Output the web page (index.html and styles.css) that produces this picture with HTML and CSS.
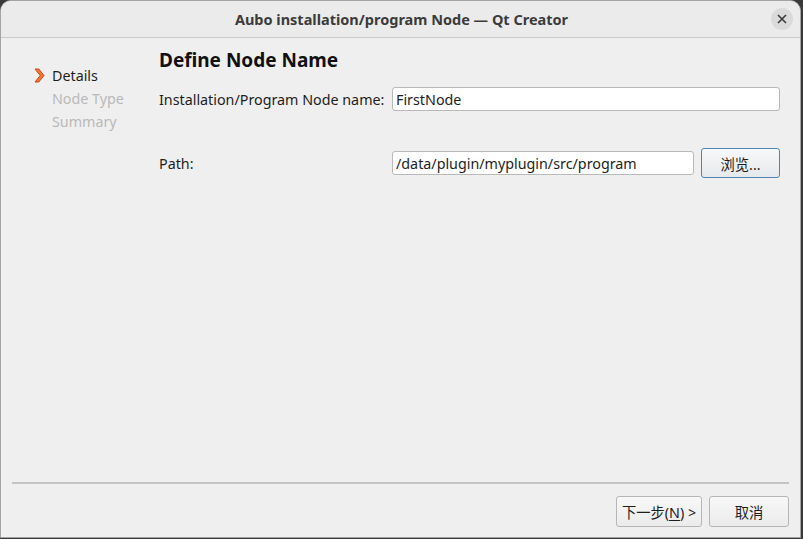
FILE: index.html
```html
<!DOCTYPE html>
<html>
<head>
<meta charset="utf-8">
<link rel="stylesheet" href="styles.css">
</head>
<body>
<div class="window">
  <div class="titlebar">
    <span class="title">Aubo installation/program Node — Qt Creator</span>
    <span class="close">
      <svg width="10" height="10" viewBox="0 0 10 10"><path d="M1 1 L9 9 M9 1 L1 9" stroke="#3a3a3a" stroke-width="1.6" fill="none"/></svg>
    </span>
  </div>
  <div class="content">
    <ul class="steps">
      <li class="step current">
        <svg class="chev" width="11" height="15" viewBox="0 0 11 15"><path d="M1 1 L4.8 1 L10 7.5 L4.8 14 L1 14 L6.2 7.5 Z" fill="#f07a35" stroke="#c9441a" stroke-width="1" stroke-linejoin="round"/></svg>
        <span>Details</span>
      </li>
      <li class="step">Node Type</li>
      <li class="step">Summary</li>
    </ul>
    <div class="page">
      <h1 class="heading">Define Node Name</h1>
      <div class="form">
        <label class="label">Installation/Program Node name:</label>
        <div class="field"><input class="input" type="text" value="FirstNode"></div>
        <label class="label">Path:</label>
        <div class="field path-field">
          <input class="input" type="text" value="/data/plugin/myplugin/src/program">
          <button class="btn btn-default">浏览...</button>
        </div>
      </div>
    </div>
  </div>
  <div class="footer">
    <div class="sep"></div>
    <div class="buttons">
      <button class="btn btn-next">下一步(<u>N</u>) &gt;</button>
      <button class="btn btn-cancel">取消</button>
    </div>
  </div>
</div>
</body>
</html>
```
FILE: styles.css
```css
html, body {
  margin: 0;
  padding: 0;
  background: #3a3a3a;
}
body {
  width: 803px;
  height: 539px;
  overflow: hidden;
  font-family: "Noto Sans", "Noto Sans CJK SC", sans-serif;
  font-size: 14.3px;
  color: #1e1e1e;
}
.window {
  box-sizing: border-box;
  width: 801px;
  height: 538px;
  border: 1px solid #a4a4a4;
  border-radius: 11px 11px 0 0;
  background: #efefef;
  display: flex;
  flex-direction: column;
  overflow: hidden;
}
.titlebar {
  height: 36px;
  flex: none;
  border-bottom: 1px solid #c9c9c9;
  background: #ebebeb;
  display: flex;
  align-items: center;
  justify-content: center;
  position: relative;
}
.title {
  font-weight: bold;
  font-size: 14.5px;
  color: #3b3b3b;
  margin-left: 2px;
}
.close {
  position: absolute;
  right: 7px;
  top: 7px;
  width: 22px;
  height: 22px;
  border-radius: 50%;
  background: #dadada;
  display: flex;
  align-items: center;
  justify-content: center;
}
.content {
  flex: 1;
  display: flex;
}
.steps {
  list-style: none;
  margin: 0;
  padding: 26px 0 0 51px;
  width: 107px;
  flex: none;
}
.step {
  height: 23px;
  line-height: 23px;
  color: #b9b9b9;
  position: relative;
  white-space: nowrap;
}
.step.current {
  color: #1e1e1e;
}
.chev {
  position: absolute;
  left: -18px;
  top: 4px;
}
.page {
  flex: 1;
  padding: 9px 21px 0 0;
}
.heading {
  margin: 0;
  font-size: 19px;
  line-height: 26px;
  font-weight: bold;
  color: #111;
}
.form {
  margin-top: 14px;
  display: grid;
  grid-template-columns: 233px 1fr;
  row-gap: 40px;
  align-items: center;
}
.label {
  white-space: nowrap;
}
.field {
  display: flex;
  align-items: center;
  gap: 7px;
  height: 24px;
}
.input {
  box-sizing: border-box;
  flex: 1;
  min-width: 0;
  height: 24px;
  border: 1px solid #b9b9b9;
  border-radius: 3px;
  background: #fff;
  font-family: inherit;
  font-size: 14.3px;
  color: #1e1e1e;
  padding: 0 3px;
  margin: 0;
  outline: none;
}
.path-field .input {
  flex: none;
  width: 302px;
}
.btn {
  box-sizing: border-box;
  font-family: inherit;
  font-size: 14.3px;
  color: #1e1e1e;
  border: 1px solid #b6b6b6;
  border-radius: 3px;
  background: linear-gradient(#f8f8f8, #ebebeb);
  padding: 0;
  margin: 0;
  height: 31px;
}
.btn-default {
  width: 79px;
  height: 30px;
  flex: none;
  border-color: #4f84b4;
  background: linear-gradient(#f7f8f9, #e6e9ec);
}
.footer {
  flex: none;
  padding: 0 11px 10px 11px;
}
.sep {
  height: 0;
  border-top: 2px solid #c4c4c4;
  margin-bottom: 12px;
}
.buttons {
  display: flex;
  justify-content: flex-end;
  gap: 7px;
}
.btn-next {
  width: 86px;
}
.btn-cancel {
  width: 80px;
}
.btn u {
  text-underline-offset: 2px;
}
```
